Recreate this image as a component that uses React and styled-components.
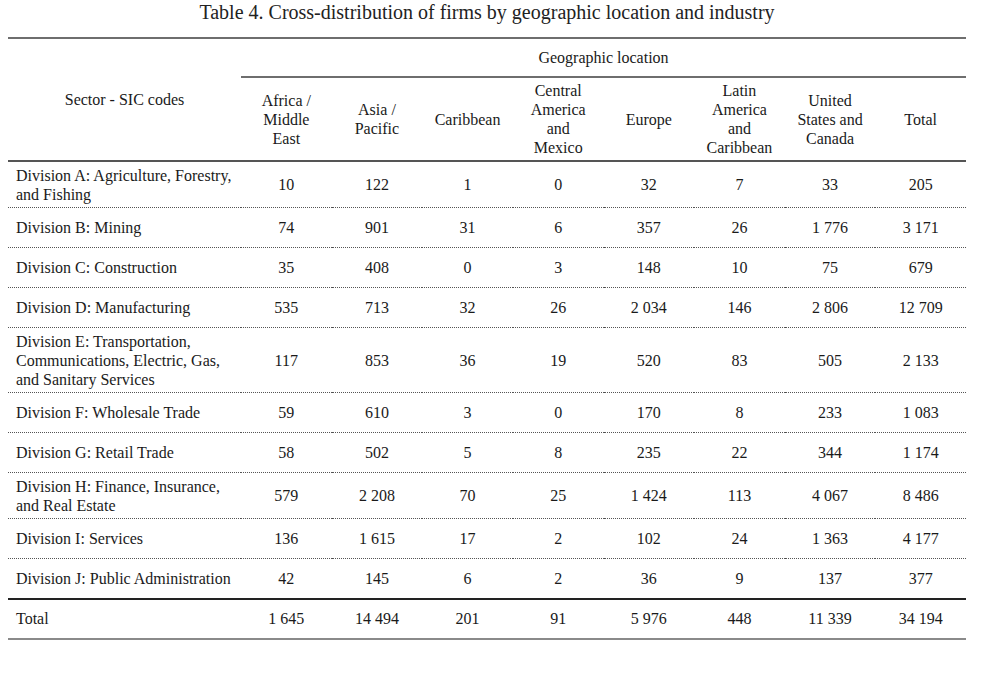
import React from "react";
import styled, { createGlobalStyle } from "styled-components";

const GlobalStyle = createGlobalStyle`
    body {
        margin: 0;
        background: #fff;
        font-family: "Liberation Serif", "Times New Roman", serif;
        color: #1a1a1a;
    }
`

const columns = [
    ["Africa /", "Middle", "East"],
    ["Asia /", "Pacific"],
    ["Caribbean"],
    ["Central", "America", "and", "Mexico"],
    ["Europe"],
    ["Latin", "America", "and", "Caribbean"],
    ["United", "States and", "Canada"],
    ["Total"],
]

const rows = [
    { sector: ["Division A: Agriculture, Forestry,", "and Fishing"], values: ["10", "122", "1", "0", "32", "7", "33", "205"] },
    { sector: ["Division B: Mining"], values: ["74", "901", "31", "6", "357", "26", "1 776", "3 171"] },
    { sector: ["Division C: Construction"], values: ["35", "408", "0", "3", "148", "10", "75", "679"] },
    { sector: ["Division D: Manufacturing"], values: ["535", "713", "32", "26", "2 034", "146", "2 806", "12 709"] },
    { sector: ["Division E: Transportation,", "Communications, Electric, Gas,", "and Sanitary Services"], values: ["117", "853", "36", "19", "520", "83", "505", "2 133"] },
    { sector: ["Division F: Wholesale Trade"], values: ["59", "610", "3", "0", "170", "8", "233", "1 083"] },
    { sector: ["Division G: Retail Trade"], values: ["58", "502", "5", "8", "235", "22", "344", "1 174"] },
    { sector: ["Division H: Finance, Insurance,", "and Real Estate"], values: ["579", "2 208", "70", "25", "1 424", "113", "4 067", "8 486"] },
    { sector: ["Division I: Services"], values: ["136", "1 615", "17", "2", "102", "24", "1 363", "4 177"] },
    { sector: ["Division J: Public Administration"], values: ["42", "145", "6", "2", "36", "9", "137", "377"] },
]

const totals = ["1 645", "14 494", "201", "91", "5 976", "448", "11 339", "34 194"]

const lines = (parts) =>
    parts.map((p, i) => (
        <React.Fragment key={i}>
            {i > 0 && <br />}
            {p}
        </React.Fragment>
    ))

const App = () => {
    return (
        <Page>
            <GlobalStyle />
            <Title>Table 4. Cross-distribution of firms by geographic location and industry</Title>
            <Table>
                <colgroup>
                    <col style={{ width: 233 }} />
                    {columns.map((_, i) => <col key={i} />)}
                </colgroup>
                <thead>
                    <tr>
                        <SectorHead rowSpan={2}>Sector - SIC codes</SectorHead>
                        <GroupHead colSpan={8}>Geographic location</GroupHead>
                    </tr>
                    <tr>
                        {columns.map((c, i) => (
                            <ColHead key={i}>{lines(c)}</ColHead>
                        ))}
                    </tr>
                </thead>
                <tbody>
                    {rows.map((r, i) => (
                        <Row key={i} $last={i === rows.length - 1}>
                            <Sector>{lines(r.sector)}</Sector>
                            {r.values.map((v, j) => <Num key={j}>{v}</Num>)}
                        </Row>
                    ))}
                    <TotalRow>
                        <Sector>Total</Sector>
                        {totals.map((v, j) => <Num key={j}>{v}</Num>)}
                    </TotalRow>
                </tbody>
            </Table>
        </Page>
    )
}

const Page = styled.div`
    padding: 0 8px;
    width: 958px;
`

const Title = styled.div`
    font-size: 20px;
    line-height: 24px;
    text-align: center;
    color: #222;
    margin-bottom: 13px;
`

const Table = styled.table`
    width: 958px;
    border-collapse: collapse;
    table-layout: fixed;
    border-top: 2px solid #6e6e6e;
    font-family: "Liberation Serif", "Times New Roman", serif;
    font-size: 16px;
    line-height: 19px;
    color: #1a1a1a;
`

const SectorHead = styled.th`
    font-weight: normal;
    text-align: center;
    vertical-align: middle;
    padding: 0 8px;
    border-bottom: 2px solid #555;
`

const GroupHead = styled.th`
    font-weight: normal;
    text-align: center;
    height: 37px;
    padding: 0;
    border-bottom: 2px solid #6e6e6e;
`

const ColHead = styled.th`
    font-weight: normal;
    text-align: center;
    vertical-align: middle;
    padding: 3px 0;
    height: 76px;
    white-space: nowrap;
    border-bottom: 2px solid #555;
`

const Row = styled.tr`
    height: 40px;
    border-bottom: ${p => (p.$last ? "2px solid #222" : "1px dotted #555")};
`

const TotalRow = styled.tr`
    height: 40px;
    border-bottom: 2px solid #8a8a8a;
`

const Sector = styled.td`
    padding: 3.5px 0 3.5px 8px;
    text-align: left;
    vertical-align: middle;
    white-space: nowrap;
`

const Num = styled.td`
    padding: 3.5px 0;
    text-align: center;
    vertical-align: middle;
    white-space: nowrap;
`

export default App;
